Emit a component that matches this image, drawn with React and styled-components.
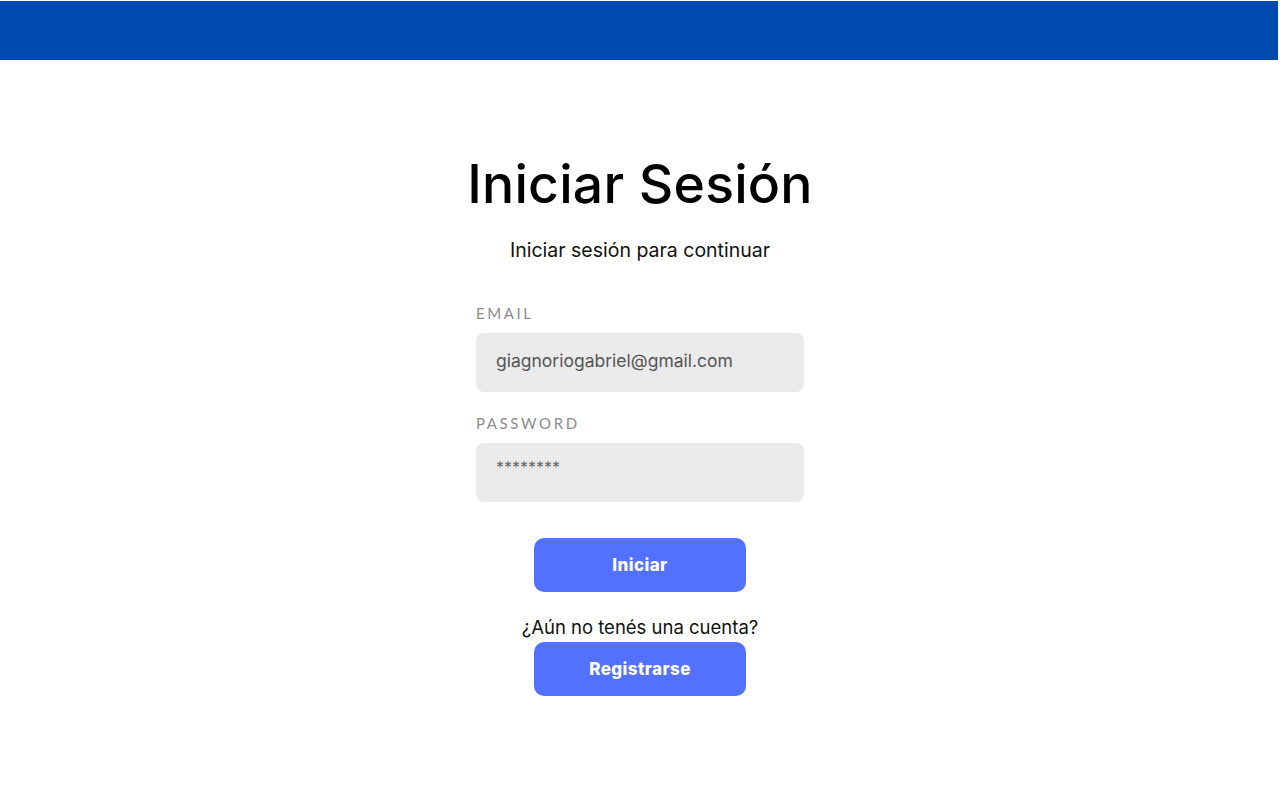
import React, { useState } from "react";
import styled, { createGlobalStyle } from "styled-components";

const GlobalStyle = createGlobalStyle`
  html, body {
    margin: 0;
    padding: 0;
    background: #ffffff;
  }
  body {
    font-family: "Inter", "Noto Sans", sans-serif;
  }
`;

const Page = styled.div`
  min-height: 800px;
  display: flex;
  flex-direction: column;
  padding-top: 1px;
`;

const TopBar = styled.header`
  height: 59px;
  width: 1278px;
  background-color: #004aad;
`;

const Main = styled.main`
  display: flex;
  flex-direction: column;
  align-items: center;
  padding-top: 88px;
`;

const Title = styled.h1`
  margin: 0;
  font-family: "Inter", sans-serif;
  font-weight: 500;
  font-size: 53.5px;
  line-height: 72px;
  color: #000;
  letter-spacing: 0.2px;
`;

const Subtitle = styled.p`
  margin: 18px 0 0;
  font-family: "Inter", "Noto Sans", sans-serif;
  font-size: 19.5px;
  line-height: 24px;
  color: #111;
`;

const Form = styled.form`
  width: 328px;
  display: flex;
  flex-direction: column;
  margin-top: 41px;
`;

const Label = styled.label`
  font-family: "Lato", "Noto Sans", sans-serif;
  font-size: 15px;
  line-height: 20px;
  letter-spacing: 2.6px;
  color: #8c8c8c;
  margin-bottom: 10px;
`;

const Input = styled.input`
  height: 59px;
  box-sizing: border-box;
  border: none;
  outline: none;
  border-radius: 8px;
  background: #ebebeb;
  padding: ${(p) => (p.$masked ? "0 20px 12px" : "0 20px 4px")};
  font-family: "Inter", "Noto Sans", sans-serif;
  font-size: 17.5px;
  font-weight: 400;
  color: #555;
  margin-bottom: ${(p) => p.$gap || 0}px;
  &::placeholder {
    color: #666;
    font-size: 16px;
  }
`;

const Actions = styled.div`
  display: flex;
  flex-direction: column;
  align-items: center;
  margin-top: 36px;
`;

const Button = styled.button`
  width: 212px;
  height: 54px;
  border: none;
  border-radius: 10px;
  background-color: #5271ff;
  color: #fff;
  font-family: "Inter", sans-serif;
  font-weight: 800;
  font-size: 17px;
  letter-spacing: 0.4px;
  cursor: pointer;
`;

const SignUpText = styled.p`
  margin: 24px 0 4px;
  font-family: "Inter", "Noto Sans", sans-serif;
  font-size: 18.5px;
  line-height: 22px;
  color: #111;
`;

const App = () => {
  const [email, setEmail] = useState("giagnoriogabriel@gmail.com");
  const [password, setPassword] = useState("");

  return (
    <Page>
      <GlobalStyle />
      <TopBar />
      <Main>
        <Title>Iniciar Sesión</Title>
        <Subtitle>Iniciar sesión para continuar</Subtitle>
        <Form onSubmit={(e) => e.preventDefault()}>
          <Label htmlFor="email">EMAIL</Label>
          <Input
            id="email"
            type="text"
            value={email}
            onChange={(e) => setEmail(e.target.value)}
            $gap={21}
          />
          <Label htmlFor="password">PASSWORD</Label>
          <Input
            id="password"
            type="text"
            value={password}
            placeholder="********"
            onChange={(e) => setPassword(e.target.value)}
            $masked
          />
          <Actions>
            <Button type="submit">Iniciar</Button>
            <SignUpText>¿Aún no tenés una cuenta?</SignUpText>
            <Button type="button">Registrarse</Button>
          </Actions>
        </Form>
      </Main>
    </Page>
  );
};

export default App;
